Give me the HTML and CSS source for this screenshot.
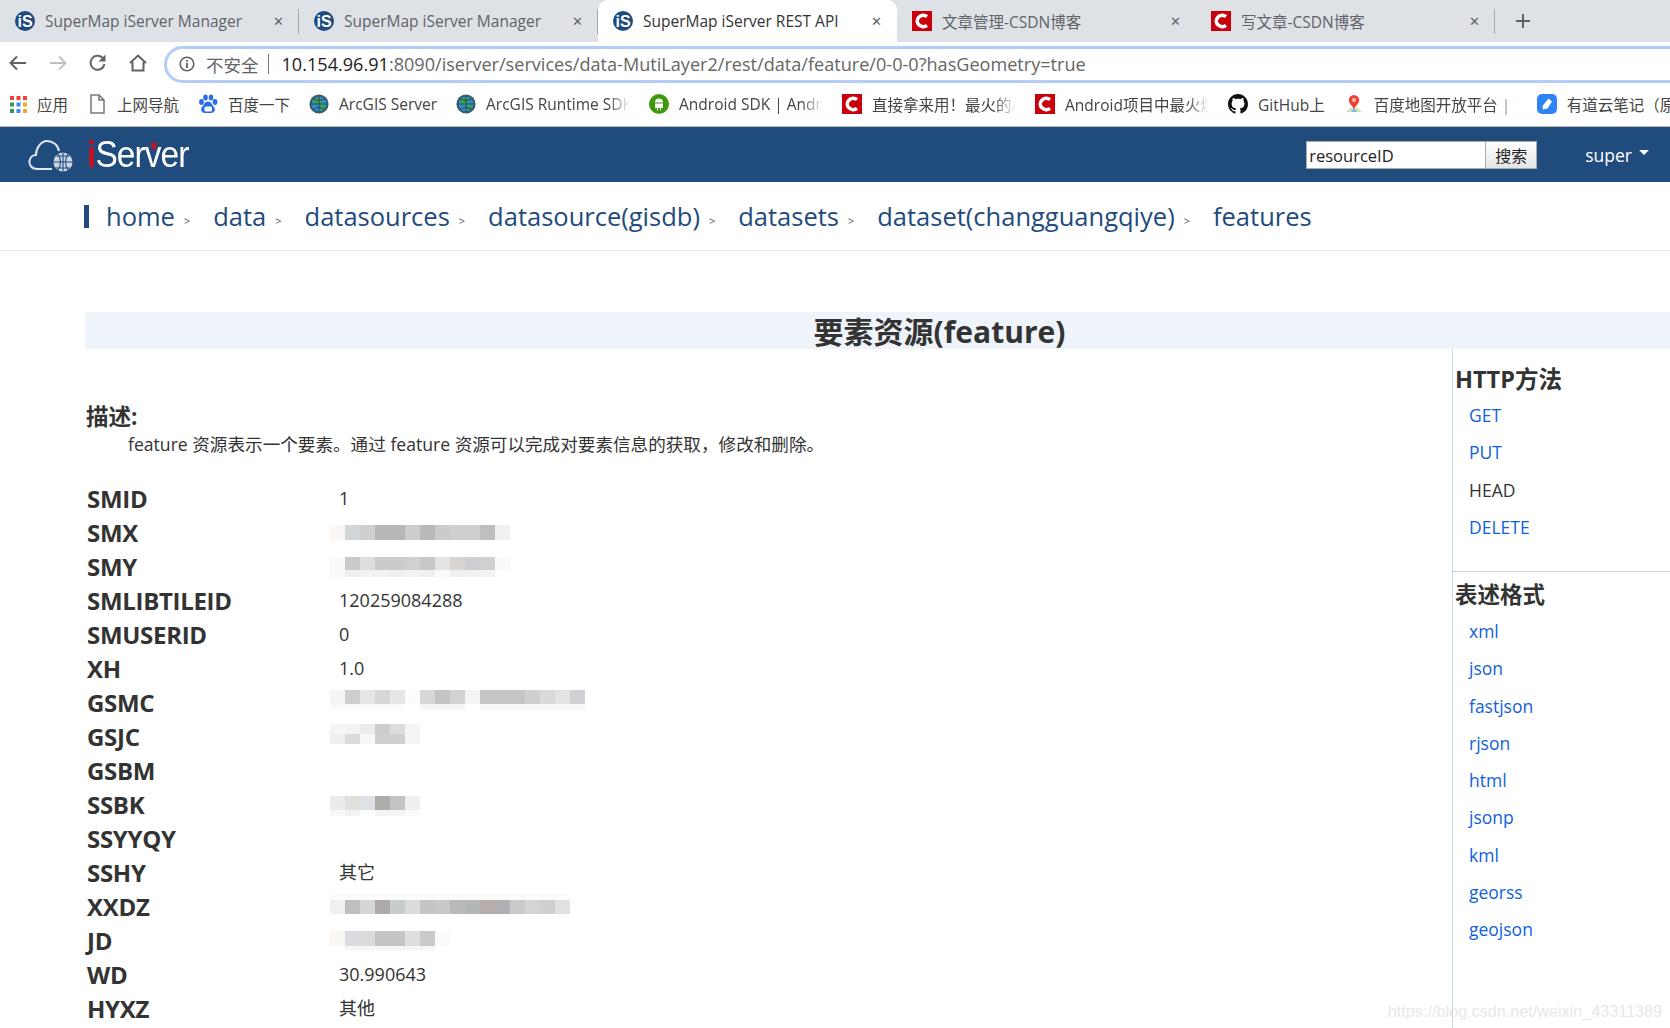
FILE: index.html
```html
<!DOCTYPE html>
<html lang="en">
<head>
    <meta charset="UTF-8">
    <meta name="viewport" content="width=device-width, initial-scale=1.0">
    <title>SuperMap iServer REST API</title>
    <link rel="stylesheet" href="styles.css">
</head>
<body>
    <svg class="defs" width="0" height="0">
        <symbol id="ico-is" viewBox="0 0 20 20">
            <circle cx="10" cy="10" r="10" fill="#1d4b7f"/>
            <text x="10" y="16" text-anchor="middle" font-family="Liberation Sans" font-weight="700" font-size="16" fill="#fff">iS</text>
        </symbol>
        <symbol id="ico-csdn" viewBox="0 0 20 20">
            <rect width="20" height="20" fill="#c9000b"/>
            <path d="M15 5.6 A6 5.6 0 1 0 15 14.4" fill="none" stroke="#fff" stroke-width="3.6"/>
        </symbol>
        <symbol id="ico-globe" viewBox="0 0 20 20">
            <circle cx="10" cy="10" r="9.6" fill="#3a5a6c"/>
            <circle cx="10" cy="10" r="7.6" fill="#2f8fc4"/>
            <path d="M4 6 L10 3.5 L13 7 L9 10 L6 10 Z M11 11 L16 10 L14.5 15 L11 16 Z" fill="#45a33b"/>
            <path d="M2 10 H18 M10 2 V18 M4 5 Q10 8 16 5 M4 15 Q10 12 16 15" stroke="#17384c" stroke-width=".7" fill="none"/>
        </symbol>
    </svg>

    <div class="tab-strip">
        <div class="tab">
            <svg class="tab-icon"><use href="#ico-is"/></svg>
            <span class="tab-title">SuperMap iServer Manager</span>
            <span class="tab-close">✕</span>
        </div>
        <div class="tab">
            <svg class="tab-icon"><use href="#ico-is"/></svg>
            <span class="tab-title">SuperMap iServer Manager</span>
            <span class="tab-close">✕</span>
        </div>
        <div class="tab tab-active">
            <svg class="tab-icon"><use href="#ico-is"/></svg>
            <span class="tab-title">SuperMap iServer REST API</span>
            <span class="tab-close">✕</span>
        </div>
        <div class="tab tab-plain">
            <svg class="tab-icon"><use href="#ico-csdn"/></svg>
            <span class="tab-title">文章管理-CSDN博客</span>
            <span class="tab-close">✕</span>
        </div>
        <div class="tab">
            <svg class="tab-icon"><use href="#ico-csdn"/></svg>
            <span class="tab-title">写文章-CSDN博客</span>
            <span class="tab-close">✕</span>
        </div>
        <svg class="tab-new" width="16" height="16" viewBox="0 0 16 16"><path d="M8 1 V15 M1 8 H15" stroke="#5f6368" stroke-width="2"/></svg>
    </div>

    <div class="toolbar">
        <svg class="nav-btn" width="20" height="20" viewBox="0 0 20 20"><path d="M18 10 H3 M9 3.5 L2.5 10 L9 16.5" fill="none" stroke="#5f6368" stroke-width="2"/></svg>
        <svg class="nav-btn nav-off" width="20" height="20" viewBox="0 0 20 20"><path d="M2 10 H17 M11 3.5 L17.5 10 L11 16.5" fill="none" stroke="#bfc1c4" stroke-width="2"/></svg>
        <svg class="nav-btn" width="20" height="20" viewBox="0 0 20 20"><path d="M16.5 11 A7 7 0 1 1 14.5 4.8" fill="none" stroke="#5f6368" stroke-width="2"/><path d="M17.5 1.5 V8.5 H10.5 Z" fill="#5f6368"/></svg>
        <svg class="nav-btn" width="20" height="20" viewBox="0 0 20 20"><path d="M2 10 L10 2.5 L18 10 M4.5 9 V17.5 H15.5 V9" fill="none" stroke="#5f6368" stroke-width="2"/></svg>
        <div class="omnibox">
            <svg class="info-icon" width="16" height="16" viewBox="0 0 16 16"><circle cx="8" cy="8" r="6.8" fill="none" stroke="#5f6368" stroke-width="1.6"/><path d="M8 7 V12 M8 4 V5.8" stroke="#5f6368" stroke-width="1.8"/></svg>
            <span class="not-secure">不安全</span>
            <span class="omni-sep"></span>
            <span class="url"><b>10.154.96.91</b>:8090/iserver/services/data-MutiLayer2/rest/data/feature/0-0-0?hasGeometry=true</span>
        </div>
    </div>

    <div class="bookmarks">
        <a class="bm">
            <svg class="bm-icon bm-apps" viewBox="0 0 17 17">
                <rect width="4" height="4" fill="#ef4136"/><rect x="6.5" width="4" height="4" fill="#ef4136"/><rect x="13" width="4" height="4" fill="#ef4136"/>
                <rect y="6.5" width="4" height="4" fill="#2f9e52"/><rect x="6.5" y="6.5" width="4" height="4" fill="#4285f4"/><rect x="13" y="6.5" width="4" height="4" fill="#f5a623"/>
                <rect y="13" width="4" height="4" fill="#2f9e52"/><rect x="6.5" y="13" width="4" height="4" fill="#4285f4"/><rect x="13" y="13" width="4" height="4" fill="#f5a623"/>
            </svg>
            <span>应用</span>
        </a>
        <a class="bm">
            <svg class="bm-icon" viewBox="0 0 20 20"><path d="M4 1 H12 L17 6 V19 H4 Z M12 1 V6 H17" fill="#fff" stroke="#777" stroke-width="1.5"/></svg>
            <span>上网导航</span>
        </a>
        <a class="bm">
            <svg class="bm-icon" viewBox="0 0 20 20" fill="#2b6fe8"><ellipse cx="3.5" cy="8" rx="2.4" ry="3"/><ellipse cx="7.5" cy="3.6" rx="2.3" ry="3"/><ellipse cx="13" cy="3.6" rx="2.3" ry="3"/><ellipse cx="17" cy="8" rx="2.4" ry="3"/><path d="M10 7.5 C6.5 7.5 6 11 4 13 C2 15.5 3.5 19 7 19 H13 C16.5 19 18 15.5 16 13 C14 11 13.5 7.5 10 7.5 Z"/><rect x="6.5" y="12.5" width="7.5" height="5" rx="1.5" fill="#fff"/></svg>
            <span>百度一下</span>
        </a>
        <a class="bm">
            <svg class="bm-icon"><use href="#ico-globe"/></svg>
            <span>ArcGIS Server</span>
        </a>
        <a class="bm">
            <svg class="bm-icon"><use href="#ico-globe"/></svg>
            <span class="bm-fade">ArcGIS Runtime SDK</span>
        </a>
        <a class="bm">
            <svg class="bm-icon" viewBox="0 0 20 20"><circle cx="10" cy="10" r="10" fill="#3f9a0b"/><path d="M6 8.5 A4 4 0 0 1 14 8.5 Z M6 9.5 H14 V14 H12 V16.5 H11 V14 H9 V16.5 H8 V14 H6 Z" fill="#fff"/></svg>
            <span class="bm-fade">Android SDK | Android</span>
        </a>
        <a class="bm">
            <svg class="bm-icon"><use href="#ico-csdn"/></svg>
            <span class="bm-fade">直接拿来用！最火的Android</span>
        </a>
        <a class="bm">
            <svg class="bm-icon"><use href="#ico-csdn"/></svg>
            <span class="bm-fade">Android项目中最火爆的</span>
        </a>
        <a class="bm">
            <svg class="bm-icon" viewBox="0 0 16 16"><path fill="#111" d="M8 0C3.58 0 0 3.58 0 8c0 3.54 2.29 6.53 5.47 7.59.4.07.55-.17.55-.38 0-.19-.01-.82-.01-1.49-2.01.37-2.53-.49-2.69-.94-.09-.23-.48-.94-.82-1.13-.28-.15-.68-.52-.01-.53.63-.01 1.08.58 1.23.82.72 1.21 1.87.87 2.33.66.07-.52.28-.87.51-1.07-1.78-.2-3.64-.89-3.64-3.95 0-.87.31-1.59.82-2.15-.08-.2-.36-1.02.08-2.12 0 0 .67-.21 2.2.82.64-.18 1.32-.27 2-.27s1.36.09 2 .27c1.53-1.04 2.2-.82 2.2-.82.44 1.1.16 1.92.08 2.12.51.56.82 1.27.82 2.15 0 3.07-1.87 3.75-3.65 3.95.29.25.54.73.54 1.48 0 1.07-.01 1.93-.01 2.2 0 .21.15.46.55.38A8.01 8.01 0 0 0 16 8c0-4.42-3.58-8-8-8z"/></svg>
            <span>GitHub上</span>
        </a>
        <a class="bm">
            <svg class="bm-icon" viewBox="0 0 20 20"><path d="M2 18 L6 14 H14 L18 18 Z" fill="#cfe3b8"/><path d="M7 18 L10 14 L13 18 Z" fill="#7db4ea"/><path d="M10 1 A5.2 5.2 0 0 1 15.2 6.2 C15.2 9.5 11.5 12 10 15 C8.5 12 4.8 9.5 4.8 6.2 A5.2 5.2 0 0 1 10 1 Z" fill="#ee4035"/><circle cx="10" cy="6" r="2" fill="#fbb"/></svg>
            <span class="bm-fade">百度地图开放平台 | 百度</span>
        </a>
        <a class="bm">
            <svg class="bm-icon" viewBox="0 0 20 20"><rect width="20" height="20" rx="5" fill="#2d83f5"/><path d="M5.5 12 L11.5 4.5 L15 7.5 L10.5 14.5 L6 15.5 Z" fill="#fff"/></svg>
            <span>有道云笔记（原有道</span>
        </a>
    </div>

    <header class="app-header">
        <div class="logo">
            <svg class="logo-mark" width="46" height="34" viewBox="0 0 46 34">
                <path d="M24 31 H9 C3 31 1 26 1.5 23 C2 19 5 17 8 17 C8 10 13 3 19 3 C25 3 30 7 31 13" fill="none" stroke="#dfe6ee" stroke-width="2"/>
                <circle cx="35" cy="24" r="9.5" fill="#cdd7e2"/>
                <path d="M25.5 24 H44.5 M35 14.5 V33.5 M28 18 H42 M28 30 H42 M30 16 Q35 24 30 32 M40 16 Q35 24 40 32" stroke="#1f4b7d" stroke-width="1.1" fill="none"/>
            </svg>
            <span class="logo-text"><i>i</i>Server<em class="logo-tick"></em></span>
        </div>
        <div class="search">
            <input class="search-input" type="text" value="resourceID">
            <button class="search-btn">搜索</button>
        </div>
        <div class="user">super<span class="caret"></span></div>
    </header>

    <nav class="crumbs">
        <a>home</a><span class="gt">&gt;</span>
        <a>data</a><span class="gt">&gt;</span>
        <a>datasources</a><span class="gt">&gt;</span>
        <a>datasource(gisdb)</a><span class="gt">&gt;</span>
        <a>datasets</a><span class="gt">&gt;</span>
        <a>dataset(changguangqiye)</a><span class="gt">&gt;</span>
        <a>features</a>
    </nav>

    <h1 class="res-title">要素资源(feature)</h1>

    <div class="res-body">
        <main class="res-main">
            <h3 class="desc-head">描述:</h3>
            <p class="desc">feature 资源表示一个要素。通过 feature 资源可以完成对要素信息的获取，修改和删除。</p>
            <div class="fields">
                <div class="row"><b>SMID</b><span>1</span></div>
                <div class="row"><b>SMX</b><div class="blur blur-smx"></div></div>
                <div class="row"><b>SMY</b><div class="blur blur-smy"></div></div>
                <div class="row"><b>SMLIBTILEID</b><span>120259084288</span></div>
                <div class="row"><b>SMUSERID</b><span>0</span></div>
                <div class="row"><b>XH</b><span>1.0</span></div>
                <div class="row"><b>GSMC</b><div class="blur blur-gsmc"></div></div>
                <div class="row"><b>GSJC</b><div class="blur blur-gsjc"></div></div>
                <div class="row"><b>GSBM</b></div>
                <div class="row"><b>SSBK</b><div class="blur blur-ssbk"></div></div>
                <div class="row"><b>SSYYQY</b></div>
                <div class="row"><b>SSHY</b><span>其它</span></div>
                <div class="row"><b>XXDZ</b><div class="blur blur-xxdz"></div></div>
                <div class="row"><b>JD</b><div class="blur blur-jd"></div></div>
                <div class="row"><b>WD</b><span>30.990643</span></div>
                <div class="row"><b>HYXZ</b><span>其他</span></div>
            </div>
        </main>
        <aside class="side">
            <section class="side-methods">
                <h3>HTTP方法</h3>
                <ul>
                    <li><a>GET</a></li>
                    <li><a>PUT</a></li>
                    <li>HEAD</li>
                    <li><a>DELETE</a></li>
                </ul>
            </section>
            <section class="side-formats">
                <h3>表述格式</h3>
                <ul>
                    <li><a>xml</a></li>
                    <li><a>json</a></li>
                    <li><a>fastjson</a></li>
                    <li><a>rjson</a></li>
                    <li><a>html</a></li>
                    <li><a>jsonp</a></li>
                    <li><a>kml</a></li>
                    <li><a>georss</a></li>
                    <li><a>geojson</a></li>
                </ul>
            </section>
        </aside>
    </div>

    <div class="watermark">https://blog.csdn.net/weixin_43311389</div>
</body>
</html>
```

FILE: styles.css
```css
html, body {
    height: 100%;
}
body {
    margin: 0;
    overflow: hidden;
    position: relative;
    background-color: #fff;
    color: #333;
    font-family: "Open Sans", "Noto Sans CJK SC", sans-serif;
}
h1, h3, p, ul {
    margin: 0;
    padding: 0;
}
ul {
    list-style: none;
}
.defs {
    position: absolute;
}

/* browser chrome */
.tab-strip {
    display: flex;
    align-items: center;
    height: 42px;
    background-color: #dee1e6;
}
.tab {
    display: flex;
    align-items: center;
    flex: none;
    box-sizing: border-box;
    width: 299px;
    height: 42px;
    padding: 0 15px;
    position: relative;
    font-size: 15.5px;
    color: #5f6368;
}
.tab::after {
    content: "";
    position: absolute;
    right: 0;
    top: 9px;
    width: 1px;
    height: 25px;
    background-color: #a5a8ad;
}
.tab-active {
    background-color: #fff;
    border-radius: 10px 10px 0 0;
    color: #333;
}
.tab-active::after,
.tab-plain::after {
    display: none;
}
.tab-icon {
    width: 20px;
    height: 20px;
    flex: none;
}
.tab-title {
    flex: 1;
    margin-left: 10px;
    white-space: nowrap;
}
.tab-close {
    font-size: 13px;
    color: #5f6368;
    font-family: "DejaVu Sans", sans-serif;
}
.tab-new {
    margin-left: 20px;
}
.toolbar {
    display: flex;
    align-items: center;
    height: 42px;
    padding-left: 8px;
    box-sizing: border-box;
}
.nav-btn {
    margin-right: 20px;
    flex: none;
}
.omnibox {
    display: flex;
    align-items: center;
    flex: none;
    box-sizing: border-box;
    width: 1600px;
    height: 37px;
    margin: 2px 0 0 -4px;
    padding-left: 12px;
    border: 3px solid #b4cdf7;
    border-radius: 19px;
    font-size: 18.1px;
    color: #666;
}
.not-secure {
    margin-left: 11px;
    font-size: 17.5px;
    color: #5f6368;
}
.omni-sep {
    width: 1px;
    height: 20px;
    margin: 0 13px 0 9px;
    background-color: #777;
}
.url {
    white-space: nowrap;
}
.url b {
    font-weight: 400;
    color: #222;
}
.bookmarks {
    display: flex;
    align-items: center;
    gap: 19px;
    box-sizing: border-box;
    height: 42px;
    padding: 0 0 2px 10px;
    overflow: hidden;
    font-size: 15.5px;
    color: #444;
    white-space: nowrap;
}
.bm {
    display: flex;
    align-items: center;
    flex: none;
    gap: 10px;
}
.bm-icon {
    width: 20px;
    height: 20px;
    flex: none;
}
.bm-apps {
    width: 17px;
    height: 17px;
}
.bm-fade {
    display: block;
    width: 144px;
    overflow: hidden;
    -webkit-mask-image: linear-gradient(90deg, #000 85%, transparent);
    mask-image: linear-gradient(90deg, #000 85%, transparent);
}

/* iServer header */
.app-header {
    display: flex;
    align-items: center;
    height: 55px;
    padding-left: 28px;
    border-top: 1px solid #b5b7ba;
    background-color: #1f4b7d;
    color: #fff;
}
.logo {
    display: flex;
    align-items: center;
    flex: 1;
}
.logo-mark {
    display: block;
}
.logo-text {
    position: relative;
    margin-left: 13px;
    font-family: "Liberation Sans", sans-serif;
    font-size: 36px;
    letter-spacing: -1px;
    transform: scaleX(.93);
    transform-origin: left;
}
.logo-text i {
    font-style: normal;
    color: #c8101e;
    font-weight: 700;
}
.logo-tick {
    position: absolute;
    left: 68px;
    top: 9px;
    border: 4px solid transparent;
    border-top: 8px solid #c8101e;
    border-bottom: 0;
}
.search {
    display: flex;
    height: 28px;
    margin-top: 1px;
}
.search-input {
    box-sizing: border-box;
    width: 179px;
    height: 28px;
    padding: 0 2px;
    border: 1px solid #aaa;
    border-right: 0;
    font-family: "Open Sans", sans-serif;
    font-size: 16.5px;
    color: #222;
}
.search-btn {
    box-sizing: border-box;
    width: 52px;
    height: 28px;
    padding: 0;
    border: 1px solid #aaa;
    background: linear-gradient(#fff, #e4e4e4);
    font-family: "Noto Sans CJK SC", sans-serif;
    font-size: 16px;
    color: #222;
}
.user {
    display: flex;
    align-items: center;
    margin: 0 21px 0 48px;
    font-size: 17.5px;
}
.caret {
    margin: 0 0 4px 7px;
    border: 5px solid transparent;
    border-top: 5px solid #fff;
    border-bottom: 0;
}

/* breadcrumb */
.crumbs {
    display: flex;
    align-items: center;
    height: 68px;
    padding-left: 106px;
    position: relative;
    border-bottom: 1px solid #e6e6e6;
    font-size: 25.5px;
    color: #1f4b7d;
    white-space: nowrap;
}
.crumbs::before {
    content: "";
    position: absolute;
    left: 84px;
    top: 23px;
    width: 5px;
    height: 23px;
    background-color: #1f4b7d;
}
.gt {
    margin: 8px 23px 0 9px;
    font-size: 11px;
    color: #555;
}

/* resource page */
.res-title {
    height: 37px;
    margin: 61px 0 0 85px;
    padding-left: 124px;
    background-color: #eff4fb;
    font-size: 30px;
    font-weight: 700;
    line-height: 39px;
    text-align: center;
    color: #333;
}
.res-body {
    display: flex;
}
.res-main {
    flex: 1;
    padding: 53px 0 0 87px;
}
.desc-head {
    margin-left: -1px;
    font-size: 22.5px;
    line-height: 30px;
}
.desc {
    margin: -1px 0 0 41px;
    font-size: 17.6px;
    line-height: 26px;
}
.fields {
    margin-top: 25px;
}
.row {
    display: flex;
    height: 34px;
    font-size: 18px;
    line-height: 32px;
}
.row b {
    flex: none;
    width: 252px;
    font-size: 24px;
    line-height: 34px;
    letter-spacing: -.3px;
}
.blur {
    margin-left: -9px;
    height: 15px;
    background-repeat: no-repeat;
}
.blur-smx {
    width: 180px;
    margin-top: 9px;
    background-image: linear-gradient(90deg, #faf7f4 0 15px, #d0d5d8 0 30px, #cfcfcf 0 45px, #b8b7b5 0 75px, #cdcdcb 0 90px, #b9b9b9 0 105px, #cbcbcb 0 120px, #cfcfcf 0 150px, #bfbfbd 0 165px, #f0f1f3 0 180px);
}
.blur-smy {
    width: 180px;
    height: 20px;
    margin-top: 7px;
    background-image:
        linear-gradient(90deg, #fafafa 0 15px, #c9cacc 0 30px, #dedede 0 45px, #cbcbcb 0 75px, #d0d0d0 0 90px, #c8c8c8 0 105px, #e4e4e4 0 120px, #d8d5d3 0 135px, #ccced1 0 150px, #d0d0d0 0 165px, #fafafb 0 180px),
        linear-gradient(90deg, #f9f9f9 0 15px, #f0f0f0 0 30px, #f2f2f2 0 60px, #f0f0f0 0 75px, #f2f2f2 0 90px, #f0f0f0 0 105px, #f9f9f9 0 120px, #f0f0f0 0 135px, #f2f2f2 0 165px, #fff 0 180px);
    background-size: 100% 13px, 100% 7px;
    background-position: 0 0, 0 13px;
}
.blur-gsmc {
    width: 255px;
    height: 20px;
    margin-top: 4px;
    background-image:
        linear-gradient(90deg, #f5f5f5 0 15px, #cfcdce 0 30px, #e4e5e7 0 45px, #d8d6d7 0 60px, #e6e7e6 0 75px, #fbfcfb 0 90px, #d8d7d5 0 105px, #c5c4c4 0 120px, #d2d1d3 0 135px, #f3f5f4 0 150px, #c6c6c6 0 195px, #cfcfd2 0 210px, #d9dad9 0 225px, #e4e3e0 0 240px, #cfd0d3 0 255px),
        linear-gradient(90deg, #fafafa 0 75px, #fff 0 90px, #f6f6f6 0 135px, #fff 0 150px, #f7f7f7 0 255px);
    background-size: 100% 14px, 100% 6px;
    background-position: 0 0, 0 14px;
}
.blur-gsjc {
    width: 90px;
    height: 20px;
    margin-top: 4px;
    background-image:
        linear-gradient(90deg, #f5f5f5 0 15px, #f3f3f3 0 30px, #ebebed 0 45px, #cdcccc 0 60px, #dcdcdc 0 75px, #f3f4f4 0 90px),
        linear-gradient(90deg, #efeff1 0 15px, #dcdcda 0 30px, #f7f8fa 0 45px, #d0cfcf 0 60px, #cfd0ce 0 75px, #f3f4f4 0 90px);
    background-size: 100% 10px, 100% 10px;
    background-position: 0 0, 0 10px;
}
.blur-ssbk {
    width: 90px;
    height: 20px;
    margin-top: 8px;
    background-image:
        linear-gradient(90deg, #ebebec 0 15px, #e0e0dd 0 30px, #dee2e6 0 45px, #adacaa 0 60px, #c3c3c3 0 75px, #eeefef 0 90px),
        linear-gradient(90deg, #f7f7f7 0 15px, #f2f2f2 0 30px, #fff 0 45px, #f3f3f3 0 60px, #f5f5f5 0 75px, #fafafa 0 90px);
    background-size: 100% 14px, 100% 6px;
    background-position: 0 0, 0 14px;
}
.blur-xxdz {
    width: 240px;
    height: 20px;
    margin-top: 4px;
    background-image:
        linear-gradient(#fbfbfb, #fbfbfb),
        linear-gradient(90deg, #f1f0ee 0 15px, #c1bdc0 0 30px, #d5d6da 0 45px, #aca9a6 0 60px, #c7cccd 0 75px, #dcdcdc 0 90px, #c6c5c4 0 105px, #c8c8c6 0 120px, #b7b9ba 0 135px, #b3b7b7 0 150px, #b5aeaa 0 165px, #aeb0b4 0 180px, #c8cacd 0 195px, #d4d4d4 0 210px, #cfcfcd 0 225px, #e0e2e0 0 240px);
    background-size: 100% 6px, 100% 14px;
    background-position: 0 0, 0 6px;
}
.blur-jd {
    width: 120px;
    height: 20px;
    margin-top: 7px;
    background-image:
        linear-gradient(90deg, #f9f6f3 0 15px, #d8dce0 0 30px, #d9dbdc 0 45px, #c5c5c3 0 75px, #dededc 0 90px, #cacaca 0 105px, #fafbfd 0 120px),
        linear-gradient(90deg, #fff 0 15px, #f6f6f6 0 105px, #fff 0 120px);
    background-size: 100% 15px, 100% 5px;
    background-position: 0 0, 0 15px;
}
.side {
    flex: none;
    box-sizing: border-box;
    width: 218px;
    height: 700px;
    border-left: 1px solid #c5d5ea;
}
.side h3 {
    margin-left: 2px;
    font-size: 22.5px;
    line-height: 30px;
}
.side ul {
    margin-left: 16px;
    font-size: 17.5px;
}
.side li {
    height: 37.3px;
    line-height: 37.3px;
}
.side a {
    color: #0f5fe0;
}
.side-methods {
    height: 223px;
    padding-top: 15px;
    box-sizing: border-box;
    border-bottom: 1px solid #c5d5ea;
}
.side-methods h3 {
    font-size: 23.5px;
}
.side-methods ul {
    margin-top: 3px;
}
.side-formats {
    padding-top: 8px;
}
.side-formats ul {
    margin-top: 3px;
}
.watermark {
    position: absolute;
    right: 8px;
    bottom: 7px;
    font-family: "Liberation Sans", sans-serif;
    font-size: 16.2px;
    color: #e8e8e8;
}
```
